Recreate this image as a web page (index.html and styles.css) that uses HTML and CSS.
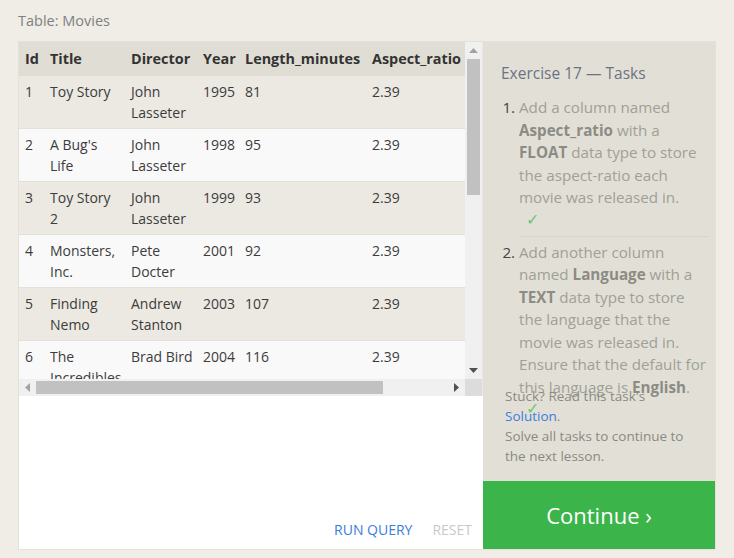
FILE: index.html
```html
<!DOCTYPE html>
<html>
<head>
<meta charset="utf-8">
<link rel="stylesheet" href="styles.css">
</head>
<body>
<div class="page">
  <div class="caption">Table: Movies</div>
  <div class="main">
    <div class="left">
      <div class="tablebox">
        <div class="viewport">
          <table class="movies">
            <colgroup>
              <col class="c-id"><col class="c-title"><col class="c-dir"><col class="c-year"><col class="c-len"><col class="c-asp">
            </colgroup>
            <thead>
              <tr><th>Id</th><th>Title</th><th>Director</th><th>Year</th><th>Length_minutes</th><th>Aspect_ratio</th></tr>
            </thead>
            <tbody>
              <tr><td>1</td><td>Toy Story</td><td>John Lasseter</td><td>1995</td><td>81</td><td>2.39</td></tr>
              <tr><td>2</td><td>A Bug's Life</td><td>John Lasseter</td><td>1998</td><td>95</td><td>2.39</td></tr>
              <tr><td>3</td><td>Toy Story 2</td><td>John Lasseter</td><td>1999</td><td>93</td><td>2.39</td></tr>
              <tr><td>4</td><td>Monsters, Inc.</td><td>Pete Docter</td><td>2001</td><td>92</td><td>2.39</td></tr>
              <tr><td>5</td><td>Finding Nemo</td><td>Andrew Stanton</td><td>2003</td><td>107</td><td>2.39</td></tr>
              <tr><td>6</td><td>The Incredibles</td><td>Brad Bird</td><td>2004</td><td>116</td><td>2.39</td></tr>
              <tr><td>7</td><td>Cars</td><td>John Lasseter</td><td>2006</td><td>117</td><td>2.39</td></tr>
              <tr><td>8</td><td>Ratatouille</td><td>Brad Bird</td><td>2007</td><td>115</td><td>2.39</td></tr>
            </tbody>
          </table>
        </div>
        <div class="vbar">
          <div class="sb-btn"><svg width="9" height="5" viewBox="0 0 9 5"><polygon points="0,5 4.5,0 9,5" fill="#a3a3a3"/></svg></div>
          <div class="vtrack"><div class="vthumb"></div></div>
          <div class="sb-btn"><svg width="9" height="5" viewBox="0 0 9 5"><polygon points="0,0 9,0 4.5,5" fill="#505050"/></svg></div>
        </div>
        <div class="hbar">
          <div class="sb-btn"><svg width="5" height="9" viewBox="0 0 5 9"><polygon points="5,0 5,9 0,4.5" fill="#a3a3a3"/></svg></div>
          <div class="htrack"><div class="hthumb"></div></div>
          <div class="sb-btn"><svg width="5" height="9" viewBox="0 0 5 9"><polygon points="0,0 5,4.5 0,9" fill="#505050"/></svg></div>
        </div>
        <div class="corner"></div>
      </div>
      <div class="editor"></div>
      <div class="actions">
        <span class="run">RUN QUERY</span>
        <span class="reset">RESET</span>
      </div>
    </div>
    <div class="right">
      <div class="tasks">
        <div class="tasks-title">Exercise 17 — Tasks</div>
        <ol class="task-list">
          <li class="task">Add a column named <b>Aspect_ratio</b> with a <b>FLOAT</b> data type to store the aspect-ratio each movie was released in.<div class="check">✓</div></li>
          <li class="task">Add another column named <b>Language</b> with a <b>TEXT</b> data type to store the language that the movie was released in. Ensure that the default for this language is <b>English</b>.<div class="check">✓</div></li>
        </ol>
      </div>
      <div class="help">
        <div>Stuck? Read this task's</div>
        <div><span class="link">Solution</span>.</div>
        <div>Solve all tasks to continue to the next lesson.</div>
      </div>
      <div class="continue">Continue ›</div>
    </div>
  </div>
</div>
</body>
</html>
```

FILE: styles.css
```css
html, body {
  margin: 0;
  padding: 0;
  background: #efede6;
  font-family: "Open Sans", "Noto Sans", sans-serif;
}
.page {
  width: 734px;
  height: 558px;
  padding: 10px 18px 0 18px;
  box-sizing: border-box;
}
.caption {
  font-size: 14.5px;
  line-height: 21px;
  color: #808080;
  height: 31px;
}
.main {
  display: flex;
  width: 698px;
  height: 509px;
  border: 1px solid #e3e1da;
  box-sizing: border-box;
  background: #ffffff;
}
.left {
  width: 464px;
  display: flex;
  flex-direction: column;
  background: #ffffff;
}
.tablebox {
  height: 354px;
  display: grid;
  grid-template-columns: 446px 17px;
  grid-template-rows: 337px 17px;
  border-right: 1px solid #e9e7e0;
}
.viewport {
  overflow: hidden;
  background: #f9f9f9;
}
.vbar {
  display: flex;
  flex-direction: column;
  background: #f0f0f0;
}
.hbar {
  display: flex;
  background: #f0f0f0;
}
.sb-btn {
  flex: 0 0 17px;
  height: 17px;
  display: flex;
  align-items: center;
  justify-content: center;
}
.vtrack {
  flex: 1;
  padding: 0 2px;
}
.vthumb {
  height: 136px;
  background: #c1c1c1;
}
.htrack {
  flex: 1;
  padding: 2px 0;
}
.hthumb {
  width: 347px;
  height: 100%;
  background: #c1c1c1;
}
.corner {
  background: #dcdcdc;
}
.movies {
  border-collapse: collapse;
  table-layout: fixed;
  width: 530px;
  font-size: 14px;
  line-height: 21px;
  color: #3c3c3c;
}
.c-id { width: 25px; }
.c-title { width: 81px; }
.c-dir { width: 72px; }
.c-year { width: 42px; }
.c-len { width: 127px; }
.c-asp { width: 183px; }
.movies th {
  text-align: left;
  font-weight: 700;
  font-size: 14.4px;
  color: #333333;
  background: #e0ded4;
  padding: 6px 0 6px 6px;
  white-space: nowrap;
  border-bottom: 1px solid #e0ded4;
}
.movies td {
  vertical-align: top;
  padding: 5px 4px 5px 6px;
  border-bottom: 1px solid #e3e1da;
}
.movies tbody tr:nth-child(odd) td { background: #ebe9e2; }
.movies tbody tr:nth-child(even) td { background: #f9f9f9; }
.editor {
  flex: 1;
  background: #ffffff;
}
.actions {
  display: flex;
  justify-content: flex-end;
  gap: 20px;
  padding: 0 11px 9px 0;
  font-size: 14px;
  line-height: 20px;
}
.run { color: #3b7ddd; }
.reset { color: #c9c9c9; }
.right {
  width: 232px;
  display: flex;
  flex-direction: column;
  background: #e2e0d6;
}
.tasks {
  flex: 1;
  min-height: 0;
  padding: 20px 7px 0 18px;
}
.tasks-title {
  font-size: 15.5px;
  line-height: 22px;
  color: #6b7282;
  margin-bottom: 12px;
}
.task-list {
  margin: 0;
  padding: 0 0 0 18px;
}
.task {
  font-size: 15.2px;
  line-height: 22.5px;
  color: #a09f98;
  padding: 0 0 6px 0;
}
.task + .task {
  border-top: 1px solid #d6d4ca;
  padding-top: 4px;
}
.task::marker {
  color: #444444;
}
.task b {
  color: #8c8b85;
}
.check {
  color: #6cc47a;
  font-size: 16px;
  padding-left: 7px;
  line-height: 21px;
}
.help {
  padding: 0 8px 15px 22px;
  font-size: 13.5px;
  line-height: 20px;
  color: #8a8983;
}
.link { color: #3b7ddd; }
.continue {
  height: 68px;
  background: #3bb54a;
  color: #ffffff;
  font-size: 22px;
  display: flex;
  align-items: center;
  justify-content: center;
}
```
